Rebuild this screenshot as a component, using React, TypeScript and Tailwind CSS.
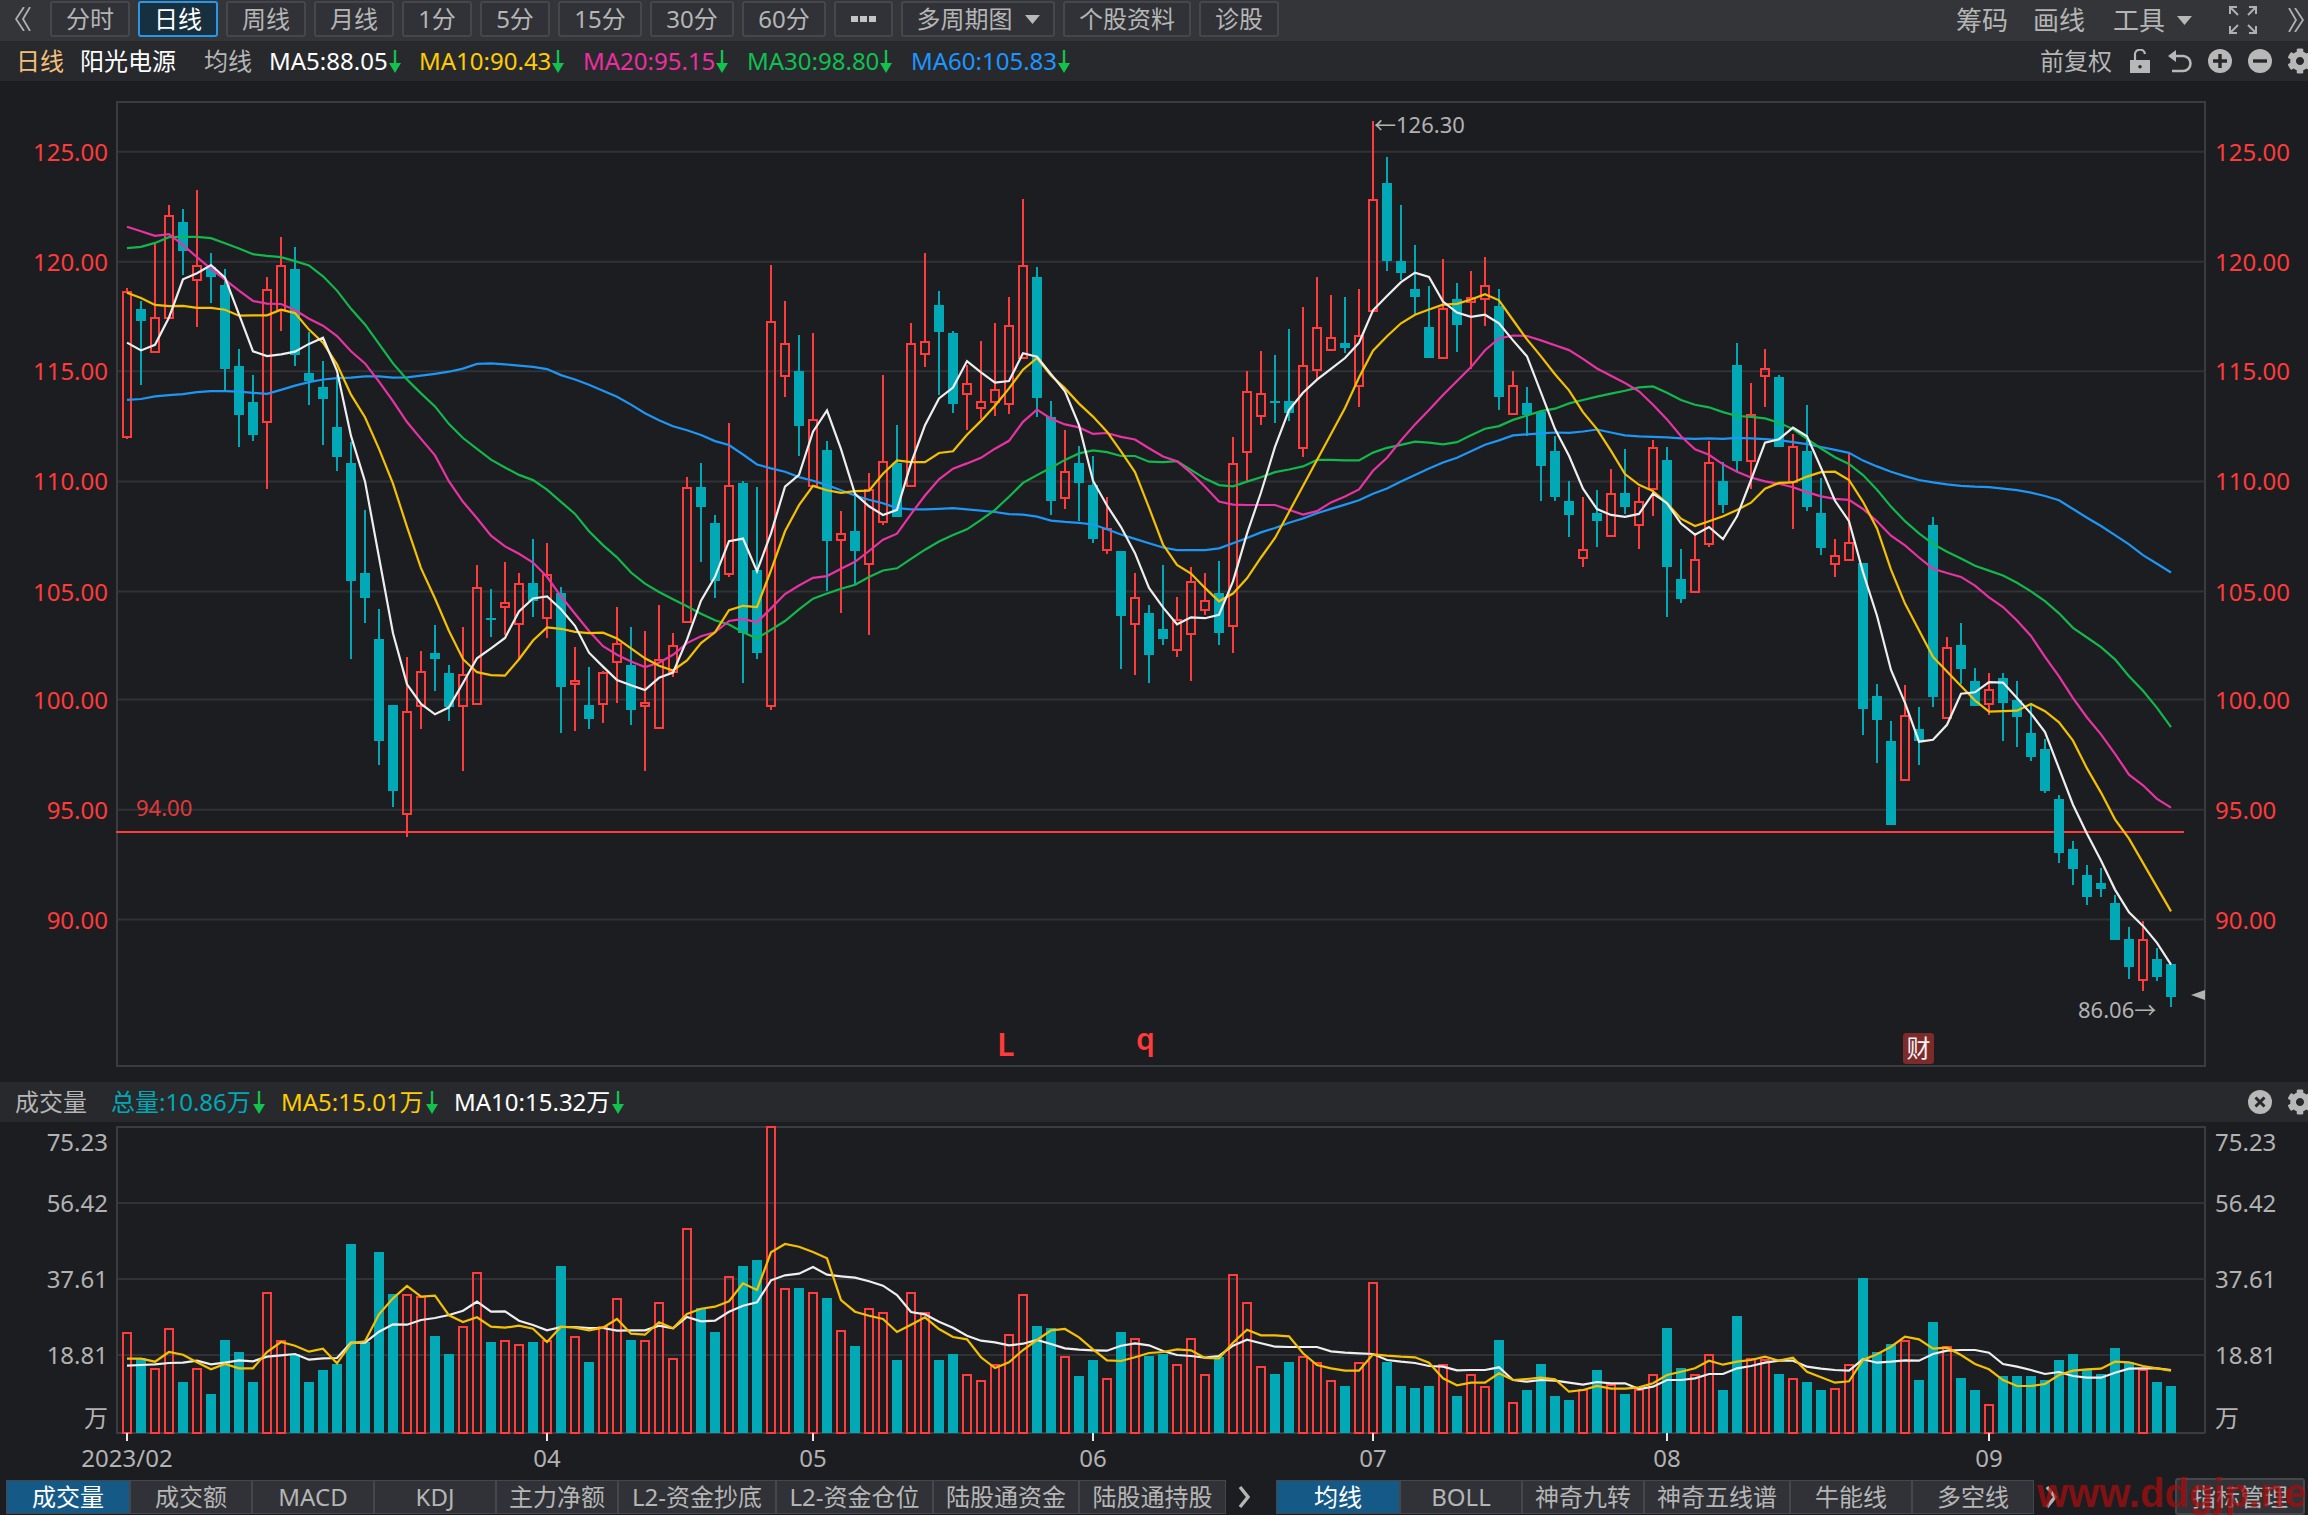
import { FaCog } from "react-icons/fa"

const RED = "#ff3b3b"
const TEAL = "#00a9b5"
const GRID = "#313236"
const AXIS = "#3b3c41"
const GRAY = "#b2b2b2"

// one bar every 14px, starting at x=127
const barX = (i: number) => 127 + 14 * i

// traced values, in pixels of each traced strip: [high, top, bottom, low, up]
type Raw = [number, number, number, number, number]

const candlesA: Raw[] = [
  [248,258,592,597,1],[280,297,325,473,0],[145,318,397,397,1],[58,83,319,319,1],[68,96,163,220,0],[22,198,231,338,1],[168,200,223,284,0],
  [205,242,435,490,0],[390,428,541,616,0],[450,511,587,602,0],[224,253,558,712,1],[131,198,300,348,1],[154,205,403,430,0],[350,445,463,519,0],
  [418,477,504,610,0],[450,570,638,670,0],[605,653,924,1105,0],[760,907,965,1022,0],[990,1058,1293,1349,0],[1211,1211,1408,1445,0],[1100,1226,1462,1514,1],
  [1086,1134,1213,1265,1],[1026,1091,1105,1178,0],[1118,1137,1215,1247,0],[1031,1142,1213,1362,1],[888,940,1209,1209,1],[943,1009,1012,1053,0],[880,975,984,1050,1],
  [906,931,1024,1105,1],[828,929,970,1008,0],[838,912,1010,1057,1],[938,952,1168,1275,0],[1078,1155,1163,1270,1],[1123,1211,1242,1265,0],[1133,1138,1209,1252,1],
  [985,1070,1111,1205,1],[1031,1118,1223,1257,0],[1040,1206,1214,1362,1],[980,1106,1264,1264,1],[1045,1074,1135,1145,1],[685,710,1019,1019,1],[653,708,753,880,0],
  [772,792,924,965,0],[560,705,909,915,1],[693,699,1045,1160,0],[708,900,1090,1105,0],[197,327,1213,1223,1],[280,378,452,500,1],[358,440,568,636,0],
]

const candlesB: Raw[] = [
  [537,738,890,890,1],[787,806,1017,1132,0],[948,1000,1015,1182,1],[907,995,1040,1115,0],[860,899,1070,1233,1],[634,834,973,979,1],[749,836,961,961,0],
  [515,562,890,890,1],[353,557,585,616,1],[440,473,536,680,0],[533,537,702,722,0],[610,655,678,762,1],[556,696,711,735,1],[515,668,697,728,1],
  [455,521,701,725,1],[228,382,595,595,1],[385,408,688,730,0],[694,731,924,957,0],[760,857,918,943,1],[797,838,883,971,0],[820,888,1012,1022,0],
  [915,990,1038,1048,1],[1040,1040,1191,1311,0],[1091,1148,1209,1326,1],[1164,1183,1280,1344,0],[1072,1220,1243,1257,0],[1146,1199,1268,1284,1],[1078,1111,1231,1340,1],
  [1091,1156,1177,1188,1],[1063,1138,1229,1257,0],[778,839,1213,1275,1],[626,673,811,878,1],[579,678,729,749,1],[588,694,697,745,0],[528,694,722,740,0],
  [478,613,803,823,1],[408,525,623,645,1],[450,548,577,577,1],[455,560,573,583,0],[436,544,660,708,1],[48,230,486,486,1],[131,191,371,394,0],
  [242,372,398,415,0],[335,436,454,495,0],[428,523,596,596,0],[367,483,595,595,1],[422,460,518,582,0],[394,456,466,620,1],[363,429,460,522,1],[436,474,685,716,0],
]

const candlesC: Raw[] = [
  [105,136,194,194,1],[138,171,195,240,0],[190,190,302,373,0],[240,270,365,373,0],[332,373,402,448,0],[365,474,492,510,1],[350,399,414,468,0],
  [308,359,446,446,1],[266,357,386,400,0],[345,375,422,472,1],[247,264,348,405,1],[262,288,510,613,0],[472,534,576,584,0],[440,495,561,561,1],
  [250,296,463,468,1],[292,332,382,398,0],[47,93,291,312,0],[130,197,290,348,1],[60,102,116,180,1],[113,118,261,261,0],[235,263,335,431,1],
  [176,270,386,394,0],[325,399,471,485,0],[452,487,503,530,1],[277,461,495,495,1],[501,501,803,856,0],[750,775,826,914,0],[827,869,1041,1041,0],
  [754,817,949,949,1],[798,844,868,918,0],[406,423,778,798,0],[655,677,822,822,1],[625,671,720,750,0],[717,745,797,797,0],[728,763,792,815,1],
  [728,738,790,869,0],[745,783,819,881,0],[795,852,902,910,0],[865,885,972,975,0],[980,988,1100,1120,0],[1075,1091,1132,1166,0],[1124,1145,1190,1207,0],
  [1130,1161,1174,1190,0],[1187,1203,1280,1280,0],[1252,1277,1334,1360,0],[1240,1279,1362,1384,1],[1295,1318,1355,1364,0],[1328,1328,1396,1417,0],
]

const yA = (z: number) => 180 + z / 2.306
const yB = (z: number) => 100 + z / 2.306
const yC = (z: number) => 320 + z / 2.063

const toCandles = (rows: Raw[], y: (z: number) => number) =>
  rows.map(([h, t, b, l, u]) => ({ h: y(h), t: y(t), b: y(b), l: y(l), up: u === 1 }))

const candles = [...toCandles(candlesA, yA), ...toCandles(candlesB, yB), ...toCandles(candlesC, yC)]

const priceLine = (a: number[], b: number[], c: number[]) => [...a.map(yA), ...b.map(yB), ...c.map(yC)]

const ma5 = priceLine(
  [375,393,380,317,229,215,196,225,310,395,406,402,396,378,364,440,590,695,870,1045,1163,1208,1232,1216,1160,1103,1080,1056,995,965,960,990,1028,1090,1122,1153,1165,1176,1148,1136,1060,970,915,833,827,902,815,707,680],
  [765,716,805,908,937,957,945,838,750,688,663,602,628,652,648,584,592,632,672,750,878,935,985,1045,1125,1170,1209,1193,1195,1187,1110,1000,905,800,715,675,645,620,595,560,485,452,420,398,408,465,490,500,495,515],
  [42,75,150,225,280,348,390,402,406,400,358,378,420,443,427,452,405,330,253,246,222,240,305,373,415,520,610,722,790,870,866,835,771,768,747,748,780,812,850,925,1000,1060,1115,1175,1222,1250,1285,1330],
)
const ma10 = priceLine(
  [260,272,288,291,290,295,295,299,313,312,312,299,307,345,375,425,495,547,620,700,800,895,965,1040,1105,1135,1142,1143,1105,1062,1032,1035,1042,1045,1044,1057,1080,1103,1120,1131,1108,1068,1043,992,982,985,900,810,750],
  [890,900,906,902,901,862,831,835,835,814,810,772,740,705,665,622,595,635,665,700,730,765,810,858,940,1025,1072,1092,1125,1156,1138,1103,1055,1010,950,890,830,770,710,640,578,545,515,495,483,472,470,460,448,462],
  [0,40,75,112,145,190,225,270,318,340,353,378,410,425,415,405,392,377,348,336,335,323,314,313,330,375,430,515,585,640,695,725,755,785,808,807,806,792,807,830,868,925,975,1030,1070,1120,1170,1220],
)
const ma20 = priceLine(
  [108,118,129,125,150,178,205,230,255,279,285,286,300,320,336,360,395,423,465,510,558,597,635,695,742,780,820,845,862,882,915,960,1000,1040,1075,1095,1110,1123,1113,1095,1068,1052,1043,1017,1012,1020,988,955,935],
  [1102,1098,1081,1065,1040,1014,1000,955,912,875,850,838,825,804,786,742,714,735,748,755,770,768,777,783,803,822,833,860,892,926,933,934,934,934,945,956,948,928,914,898,855,825,785,748,715,680,648,616,577,550],
  [32,33,42,52,62,80,100,115,130,147,175,205,240,267,278,298,313,325,333,338,345,355,364,369,371,390,415,445,465,490,513,522,530,548,572,592,620,652,695,735,780,820,855,895,938,960,988,1006],
)
const ma30 = priceLine(
  [157,154,145,132,131,131,134,146,158,171,175,178,187,197,222,255,297,333,378,423,460,492,522,563,595,620,645,663,680,692,714,742,770,810,842,870,905,931,950,967,983,1000,1015,1025,1043,1057,1037,1017,990],
  [1150,1138,1127,1118,1100,1085,1080,1058,1037,1018,1003,990,968,945,915,883,865,848,830,815,808,812,821,821,834,835,833,853,873,888,891,880,870,858,852,845,830,830,831,831,813,802,795,788,790,794,789,773,758,752],
  [206,197,188,183,172,165,158,152,146,139,137,150,165,175,180,190,198,200,203,212,225,245,265,283,297,320,350,385,415,440,462,478,492,507,517,527,542,560,580,605,635,655,675,700,735,765,800,840],
)
const ma60 = priceLine(
  [507,505,499,496,494,489,487,487,488,491,493,484,474,466,460,457,456,453,453,456,455,451,447,442,435,424,423,425,428,431,436,450,460,472,486,500,518,538,554,568,577,588,602,611,633,656,665,673,685],
  [878,888,900,912,922,930,941,944,944,943,941,944,947,950,955,956,961,970,973,975,979,990,1002,1012,1022,1032,1038,1038,1038,1034,1022,1010,997,987,975,965,953,943,933,923,908,896,880,865,850,836,825,810,795,785],
  [238,236,234,232,233,230,226,232,238,240,241,242,244,245,244,245,243,244,246,248,252,256,262,268,274,290,302,313,322,330,335,339,342,344,345,348,351,356,363,372,390,408,425,444,463,485,503,521],
)

const yV3 = (z: number) => 1060 + z / 3
const yV8 = (z: number) => 1120 + z / 3

const volTops = [
  ...[818,895,926,806,966,926,1002,840,876,966,698,842,882,966,930,912,552,845,576,702,704,710,828,882,800,638,846,842,854,846,842,618,830,906,800,716,840,842,728,896,506,745,816,650,618,600,200].map(yV3),
  ...[506,504,518,534,632,678,566,578,720,518,578,720,702,764,782,734,644,524,618,624,710,768,720,776,636,656,708,702,734,656].map(yV8),
  ...[944,890,644,728,920,942,906,890,908,962,978,908,668,906,978,984,978,914,1008,944,980,840,1028,990,912,1008,1020,990,930,974,1002,990,944,804,924,944,884,990,768,896,900,942,956,966,990,986,914,654,876,852,842,960,786,860,954,990,1034,948,948,948,960,900,882,930,942,864,906,930,966,978].map(yV3),
]

const volMa5 = [
  ...[896,896,905,876,884,907,928,912,925,925,876,846,857,875,866,910,850,844,763,715,678,710,707,766,786,772,800,803,797,806,846,800,803,811,803,777,821,824,787,805,762,746,740,724,670,690,577].map(yV3),
  ...[372,380,396,415,540,575,587,597,636,614,592,627,651,658,712,744,727,690,660,631,627,652,688,721,723,712,699,696,688,691,714,715,668,629,646,646].map(yV8),
  ...[829,880,915,925,932,932,883,887,890,892,908,955,976,968,968,940,960,957,953,958,995,990,978,986,986,982,970,945,935,925,902,914,905,900,890,902,893,935,952,968,964,900,883,860,830,838,866,863,885,912,928,960,978,978,972,945,932,928,926,905,907,918,925,932].map(yV3),
]

const volMa10 = [
  ...[917,915,913,909,908,902,913,908,901,904,890,886,882,899,895,894,848,848,815,793,794,780,774,765,752,725,755,754,782,795,811,801,801,804,804,812,811,811,797,805,771,784,782,755,737,727,661].map(yV3),
  ...[466,461,441,464,469,473,484,497,525,576,583,605,623,647,662,667,676,671,660,672,685,689,691,692,677,670,676,693,705,708,713,708,677,659,670,680].map(yV8),
  ...[861,861,861,874,878,880,882,900,905,909,918,920,931,930,930,922,960,965,960,962,968,974,966,970,970,987,980,960,960,955,942,942,925,918,908,902,902,920,926,930,932,898,908,905,901,902,882,872,870,870,878,912,920,930,942,936,948,953,953,938,926,925,925,930].map(yV3),
]

const points = (ys: number[]) => ys.map((y, i) => `${barX(i)},${y.toFixed(1)}`).join(" ")

const priceLabels = [
  { text: "125.00", y: 151.7 },
  { text: "120.00", y: 261.7 },
  { text: "115.00", y: 371.2 },
  { text: "110.00", y: 481.4 },
  { text: "105.00", y: 591.5 },
  { text: "100.00", y: 699.5 },
  { text: "95.00", y: 809.7 },
  { text: "90.00", y: 919.5 },
]

const volLabels = [
  { text: "75.23", y: 1142 },
  { text: "56.42", y: 1203 },
  { text: "37.61", y: 1279 },
  { text: "18.81", y: 1355 },
  { text: "万", y: 1418 },
]

const dates = [
  { text: "2023/02", x: 127 },
  { text: "04", x: 547 },
  { text: "05", x: 813 },
  { text: "06", x: 1093 },
  { text: "07", x: 1373 },
  { text: "08", x: 1667 },
  { text: "09", x: 1989 },
]

const periods = [
  { label: "分时", cls: "w-[80px]" },
  { label: "日线", cls: "w-[80px] bg-[#17303f] border-[#2a96e6] text-white", active: true },
  { label: "周线", cls: "w-[80px]" },
  { label: "月线", cls: "w-[80px]" },
  { label: "1分", cls: "w-[70px]" },
  { label: "5分", cls: "w-[70px]" },
  { label: "15分", cls: "w-[84px]" },
  { label: "30分", cls: "w-[84px]" },
  { label: "60分", cls: "w-[84px]" },
]

const leftTabs = [
  { label: "成交量", cls: "w-[122px]", active: true },
  { label: "成交额", cls: "w-[120px]" },
  { label: "MACD", cls: "w-[120px]" },
  { label: "KDJ", cls: "w-[120px]" },
  { label: "主力净额", cls: "w-[120px]" },
  { label: "L2-资金抄底", cls: "w-[156px]" },
  { label: "L2-资金仓位", cls: "w-[155px]" },
  { label: "陆股通资金", cls: "w-[144px]" },
  { label: "陆股通持股", cls: "w-[145px]" },
]

const rightTabs = [
  { label: "均线", cls: "w-[122px]", active: true },
  { label: "BOLL", cls: "w-[120px]" },
  { label: "神奇九转", cls: "w-[120px]" },
  { label: "神奇五线谱", cls: "w-[144px]" },
  { label: "牛能线", cls: "w-[120px]" },
  { label: "多空线", cls: "w-[120px]" },
]

function DownArrow() {
  return (
    <svg width="12" height="23" viewBox="0 0 12 23" className="shrink-0">
      <path d="M4.800 0h2.400v13H12L6 23 0 13h4.800z" fill="#12c24d" />
    </svg>
  )
}

function Caret() {
  return (
    <svg width="15" height="9" viewBox="0 0 15 9" className="shrink-0">
      <path d="M0 0h15L7.500 9z" fill="#b8b8b8" />
    </svg>
  )
}

function Chevron() {
  return (
    <svg width="12" height="24" viewBox="0 0 12 24" className="shrink-0">
      <path d="M2 2l8 10-8 10" fill="none" stroke="#b5b5b5" strokeWidth="3.400" />
    </svg>
  )
}

function DoubleAngle({ flip }: { flip?: boolean }) {
  return (
    <svg width="16" height="24" viewBox="0 0 16 24" className={flip ? "shrink-0 -scale-x-100" : "shrink-0"}>
      <path d="M1 0l7 12-7 12M7 0l8 12-8 12" fill="none" stroke="#b0b0b0" strokeWidth="1.800" />
    </svg>
  )
}

function Fullscreen() {
  return (
    <svg width="28" height="28" viewBox="0 0 28 28" className="shrink-0" fill="none" stroke="#b0b0b0" strokeWidth="2">
      <path d="M1 8V1h7M1 1l8 8M27 8V1h-7M27 1l-8 8M1 20v7h7M1 27l8-8M27 20v7h-7M27 27l-8-8" />
    </svg>
  )
}

function Lock() {
  return (
    <svg width="20" height="24" viewBox="0 0 20 24" className="shrink-0">
      <path d="M5 11V6.500a5 5 0 0 1 10-1.500" fill="none" stroke="#b8b8b8" strokeWidth="2.200" />
      <path fillRule="evenodd" d="M0 11h20v13H0zM10 16a1.800 1.800 0 1 0 0 3.600 1.800 1.800 0 0 0 0-3.600z" fill="#b8b8b8" />
    </svg>
  )
}

function Undo() {
  return (
    <svg width="24" height="23" viewBox="0 0 24 23" className="shrink-0">
      <path d="M6 6h9a7.500 7.500 0 0 1 0 15H4" fill="none" stroke="#b8b8b8" strokeWidth="2.600" />
      <path d="M0 6l8-6v12z" fill="#b8b8b8" />
    </svg>
  )
}

function RoundIcon({ kind }: { kind: "plus" | "minus" | "close" }) {
  return (
    <svg width="24" height="24" viewBox="0 0 24 24" className="shrink-0">
      <circle cx="12" cy="12" r="12" fill="#b8b8b8" />
      {kind === "plus" && <path d="M12 5v14M5 12h14" stroke="#27292d" strokeWidth="3.400" />}
      {kind === "minus" && <path d="M5 12h14" stroke="#27292d" strokeWidth="3.400" />}
      {kind === "close" && <path d="M7.500 7.500l9 9M16.500 7.500l-9 9" stroke="#27292d" strokeWidth="3" />}
    </svg>
  )
}

function Candle({ i }: { i: number }) {
  const c = candles[i]
  const x = barX(i)
  if (c.up) {
    return (
      <g stroke={RED} fill="none" shapeRendering="crispEdges" strokeWidth="2">
        <line x1={x} x2={x} y1={c.h} y2={c.t} />
        <line x1={x} x2={x} y1={c.b} y2={c.l} />
        <rect x={x - 4} y={c.t} width="8" height={Math.max(c.b - c.t, 2)} />
      </g>
    )
  }
  return (
    <g fill={TEAL} shapeRendering="crispEdges">
      <line x1={x} x2={x} y1={c.h} y2={c.l} stroke={TEAL} strokeWidth="2" />
      <rect x={x - 5} y={c.t} width="10" height={Math.max(c.b - c.t, 2)} />
    </g>
  )
}

function VolumeBar({ i }: { i: number }) {
  const x = barX(i)
  const top = volTops[i]
  if (candles[i].up) {
    return (
      <rect x={x - 4} y={top} width="8" height={1433 - top} fill="none" stroke={RED} strokeWidth="2" shapeRendering="crispEdges" />
    )
  }
  return <rect x={x - 5} y={top} width="10" height={1433 - top} fill={TEAL} shapeRendering="crispEdges" />
}

function PriceChart() {
  return (
    <svg width="2308" height="1001" viewBox="0 81 2308 1001" className="block">
      <path d="M117 1066V102H2205V1066Z" fill="none" stroke={AXIS} strokeWidth="2" />
      {priceLabels.map((p) => (
        <g key={p.text}>
          <line x1="118" x2="2205" y1={p.y} y2={p.y} stroke={GRID} strokeWidth="2" />
          <text x="108" y={p.y + 9} textAnchor="end" fontSize="24" fill={RED}>{p.text}</text>
          <text x="2215" y={p.y + 9} fontSize="24" fill={RED}>{p.text}</text>
        </g>
      ))}
      <line x1="116" x2="2184" y1="832" y2="832" stroke={RED} strokeWidth="2" />
      <text x="136" y="816" fontSize="22" fill="#e03a3a">94.00</text>
      {candles.map((_, i) => (
        <Candle key={i} i={i} />
      ))}
      <polyline points={points(ma60)} fill="none" stroke="#1e96f5" strokeWidth="2.200" />
      <polyline points={points(ma30)} fill="none" stroke="#12b84b" strokeWidth="2.200" />
      <polyline points={points(ma20)} fill="none" stroke="#e733a3" strokeWidth="2.200" />
      <polyline points={points(ma10)} fill="none" stroke="#f5c000" strokeWidth="2.200" />
      <polyline points={points(ma5)} fill="none" stroke="#eeeeee" strokeWidth="2.200" />
      <text x="1374" y="133" fontSize="22" fill={GRAY}>←126.30</text>
      <text x="2078" y="1018" fontSize="22" fill={GRAY}>86.06→</text>
      <path d="M2191 995l14-5v10z" fill={GRAY} />
      <text x="997" y="1056" fontSize="32" fontWeight="600" fill={RED}>L</text>
      <text x="1136" y="1050" fontSize="30" fontWeight="600" fill={RED}>q</text>
      <rect x="1903" y="1033" width="31" height="31" rx="3" fill="#7d2a2a" />
      <text x="1906.500" y="1057" fontSize="24" fill="#f2f2f2">财</text>
    </svg>
  )
}

function VolumeChart() {
  return (
    <svg width="2308" height="358" viewBox="0 1122 2308 358" className="block">
      <path d="M2205 1433V1127H117V1433H2205" fill="none" stroke={AXIS} strokeWidth="2" />
      {[1203, 1279, 1355].map((y) => (
        <line key={y} x1="118" x2="2205" y1={y} y2={y} stroke={GRID} strokeWidth="2" />
      ))}
      {volLabels.map((v) => (
        <g key={v.text}>
          <text x="108" y={v.y + 9} textAnchor="end" fontSize="24" fill={GRAY}>{v.text}</text>
          <text x="2215" y={v.y + 9} fontSize="24" fill={GRAY}>{v.text}</text>
        </g>
      ))}
      {candles.map((_, i) => (
        <VolumeBar key={i} i={i} />
      ))}
      <polyline points={points(volMa10)} fill="none" stroke="#eeeeee" strokeWidth="2.200" />
      <polyline points={points(volMa5)} fill="none" stroke="#f5c000" strokeWidth="2.200" />
      {dates.map((d) => (
        <g key={d.text}>
          <line x1={d.x} x2={d.x} y1="1433" y2="1441" stroke="#e8e8e8" strokeWidth="2" />
          <text x={d.x} y="1467" textAnchor="middle" fontSize="24" fill={GRAY}>{d.text}</text>
        </g>
      ))}
    </svg>
  )
}

function TabGroup({ tabs }: { tabs: { label: string; cls: string; active?: boolean }[] }) {
  return (
    <div className="flex h-[34px] gap-[2px] bg-[#45474c] p-[1px]">
      {tabs.map((t) => (
        <div
          key={t.label}
          className={`flex items-center justify-center ${t.active ? "bg-[#155a87] text-white" : "bg-[#303237] text-[#b5b5b5]"} ${t.cls}`}
        >
          {t.label}
        </div>
      ))}
    </div>
  )
}

export default function App() {
  return (
    <div className="relative h-[1515px] w-[2308px] overflow-hidden bg-[#1c1d21] font-['Noto_Sans','Noto_Sans_CJK_SC',sans-serif] text-[24px] leading-none text-[#b5b5b5]">
      <div className="flex h-[41px] items-start bg-[#333539] pt-[1px]">
        <div className="ml-[15px] mt-[6px] mr-[19px]">
          <DoubleAngle flip />
        </div>
        <div className="flex gap-2">
          {periods.map((p) => (
            <div
              key={p.label}
              className={`flex h-[36px] items-center justify-center rounded-[3px] border-2 ${p.active ? "" : "border-[#45474c] bg-[#303237]"} ${p.cls}`}
            >
              {p.label}
            </div>
          ))}
          <div className="flex h-[36px] w-[59px] items-center justify-center gap-[2px] rounded-[3px] border-2 border-[#45474c] bg-[#303237]">
            <span className="h-[6px] w-[7px] bg-[#c4c4c4]" />
            <span className="h-[6px] w-[7px] bg-[#c4c4c4]" />
            <span className="h-[6px] w-[7px] bg-[#c4c4c4]" />
          </div>
          <div className="flex h-[36px] w-[154px] items-center justify-center gap-[12px] rounded-[3px] border-2 border-[#45474c] bg-[#303237]">
            多周期图
            <Caret />
          </div>
          <div className="flex h-[36px] w-[128px] items-center justify-center rounded-[3px] border-2 border-[#45474c] bg-[#303237]">
            个股资料
          </div>
          <div className="flex h-[36px] w-[80px] items-center justify-center rounded-[3px] border-2 border-[#45474c] bg-[#303237]">
            诊股
          </div>
        </div>
        <div className="ml-auto flex h-[38px] items-center pr-[4px] text-[26px]">
          <span>筹码</span>
          <span className="ml-[25px]">画线</span>
          <span className="ml-[28px]">工具</span>
          <span className="ml-[12px]">
            <Caret />
          </span>
          <span className="ml-[37px]">
            <Fullscreen />
          </span>
          <span className="ml-[31px]">
            <DoubleAngle />
          </span>
        </div>
      </div>

      <div className="flex h-[40px] items-center bg-[#27292d]">
        <span className="ml-[16px] text-[#f5c07a]">日线</span>
        <span className="ml-[16px] text-white">阳光电源</span>
        <span className="ml-[28px]">均线</span>
        <div className="ml-[17px] flex w-[150px] items-center gap-[1px] text-white">
          MA5:88.05
          <DownArrow />
        </div>
        <div className="flex w-[164px] items-center gap-[1px] text-[#ffcc00]">
          MA10:90.43
          <DownArrow />
        </div>
        <div className="flex w-[164px] items-center gap-[1px] text-[#ec2fa0]">
          MA20:95.15
          <DownArrow />
        </div>
        <div className="flex w-[164px] items-center gap-[1px] text-[#10c050]">
          MA30:98.80
          <DownArrow />
        </div>
        <div className="flex items-center gap-[1px] text-[#1e96ff]">
          MA60:105.83
          <DownArrow />
        </div>
        <div className="ml-auto -mr-[5px] flex items-center">
          <span>前复权</span>
          <span className="ml-[18px]">
            <Lock />
          </span>
          <span className="ml-[18px]">
            <Undo />
          </span>
          <span className="ml-[16px]">
            <RoundIcon kind="plus" />
          </span>
          <span className="ml-[16px]">
            <RoundIcon kind="minus" />
          </span>
          <FaCog className="ml-[15px] shrink-0 text-[26px] text-[#b8b8b8]" />
        </div>
      </div>

      <PriceChart />

      <div className="flex h-[40px] items-center bg-[#27292d]">
        <span className="ml-[15px]">成交量</span>
        <div className="ml-[24px] flex w-[170px] items-center gap-[2px] text-[#00a9b5]">
          总量:10.86万
          <DownArrow />
        </div>
        <div className="flex w-[173px] items-center gap-[2px] text-[#ffcc00]">
          MA5:15.01万
          <DownArrow />
        </div>
        <div className="flex items-center gap-[2px] text-white">
          MA10:15.32万
          <DownArrow />
        </div>
        <div className="ml-auto -mr-[5px] flex items-center">
          <RoundIcon kind="close" />
          <FaCog className="ml-[15px] shrink-0 text-[26px] text-[#b8b8b8]" />
        </div>
      </div>

      <VolumeChart />

      <div className="flex h-[35px] items-start">
        <div className="ml-[6px]">
          <TabGroup tabs={leftTabs} />
        </div>
        <div className="ml-[12px] mt-[5px]">
          <Chevron />
        </div>
        <div className="ml-[26px]">
          <TabGroup tabs={rightTabs} />
        </div>
        <div className="ml-[11px] mt-[5px]">
          <Chevron />
        </div>
        <div className="ml-auto mr-[3px] -mt-[2px] flex h-[37px] w-[130px] items-center justify-center rounded-[3px] border-2 border-[#45474c] bg-[#303237]">
          指标管理
        </div>
      </div>

      <div className="pointer-events-none absolute left-[2037px] top-[1473px] whitespace-nowrap font-['Liberation_Sans',sans-serif] text-[40px] font-bold leading-none text-[#a30d0d]/75">
        www.ddgjp.net
      </div>
    </div>
  )
}
